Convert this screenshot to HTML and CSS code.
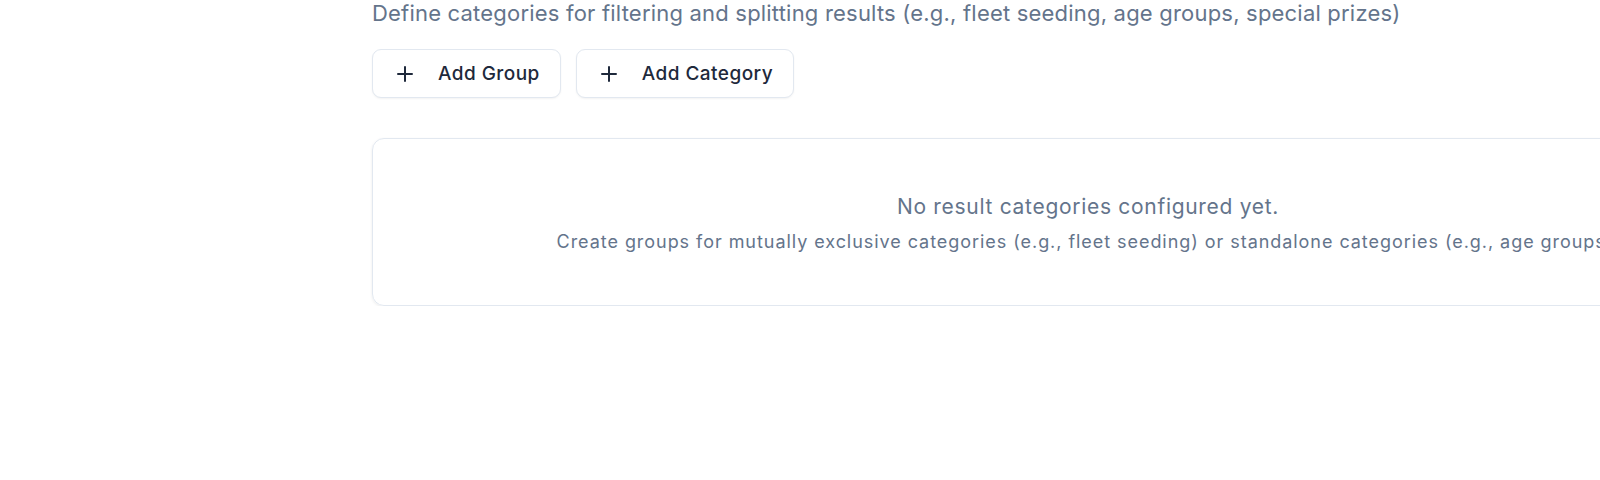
FILE: index.html
```html
<!DOCTYPE html>
<html lang="en">
<head>
    <meta charset="UTF-8">
    <title>Result Categories</title>
    <link rel="stylesheet" href="styles.css">
</head>
<body>
    <div class="page">
        <p class="intro">Define categories for filtering and splitting results (e.g., fleet seeding, age groups, special prizes)</p>

        <div class="actions">
            <button class="btn">
                <svg viewBox="0 0 24 24" class="icon"><path d="M5 12h14M12 5v14"/></svg>
                <span>Add Group</span>
            </button>
            <button class="btn">
                <svg viewBox="0 0 24 24" class="icon"><path d="M5 12h14M12 5v14"/></svg>
                <span>Add Category</span>
            </button>
        </div>

        <div class="empty">
            <div class="empty-title">No result categories configured yet.</div>
            <div class="empty-text">Create groups for mutually exclusive categories (e.g., fleet seeding) or standalone categories (e.g., age groups).</div>
        </div>
    </div>
</body>
</html>
```

FILE: styles.css
```css
html, body {
    margin: 0;
    overflow: hidden;
    background: #ffffff;
}

body {
    font-family: Inter, 'Noto Sans', sans-serif;
    color: #0f172a;
}

.page {
    width: 1432px;
    padding-left: 372px;
}

.intro {
    margin: -1px 0 0;
    font-size: 22px;
    line-height: 28px;
    letter-spacing: 0.2px;
    color: #64748b;
}

.actions {
    display: flex;
    gap: 15px;
    margin-top: 22px;
}

.btn {
    display: flex;
    align-items: center;
    gap: 21px;
    height: 49px;
    padding: 0 20px;
    background: #ffffff;
    border: 1px solid #e2e8f0;
    border-radius: 9px;
    box-shadow: 0 1px 2px rgba(0,0,0,0.05);
    font-family: inherit;
    font-size: 19px;
    font-weight: 500;
    letter-spacing: 0.45px;
    color: #1e293b;
    cursor: pointer;
}

.icon {
    width: 24px;
    height: 24px;
    fill: none;
    stroke: currentColor;
    stroke-width: 2;
    stroke-linecap: round;
}

.empty {
    margin-top: 40px;
    padding: 53px 40px 51px;
    border: 1px solid #e2e8f0;
    border-radius: 12px;
    box-shadow: 0 1px 3px rgba(0,0,0,0.08);
    text-align: center;
    color: #64748b;
}

.empty-title {
    font-size: 21px;
    line-height: 30px;
    letter-spacing: 0.7px;
}

.empty-text {
    margin-top: 7px;
    font-size: 18px;
    line-height: 25px;
    letter-spacing: 0.95px;
}
```
